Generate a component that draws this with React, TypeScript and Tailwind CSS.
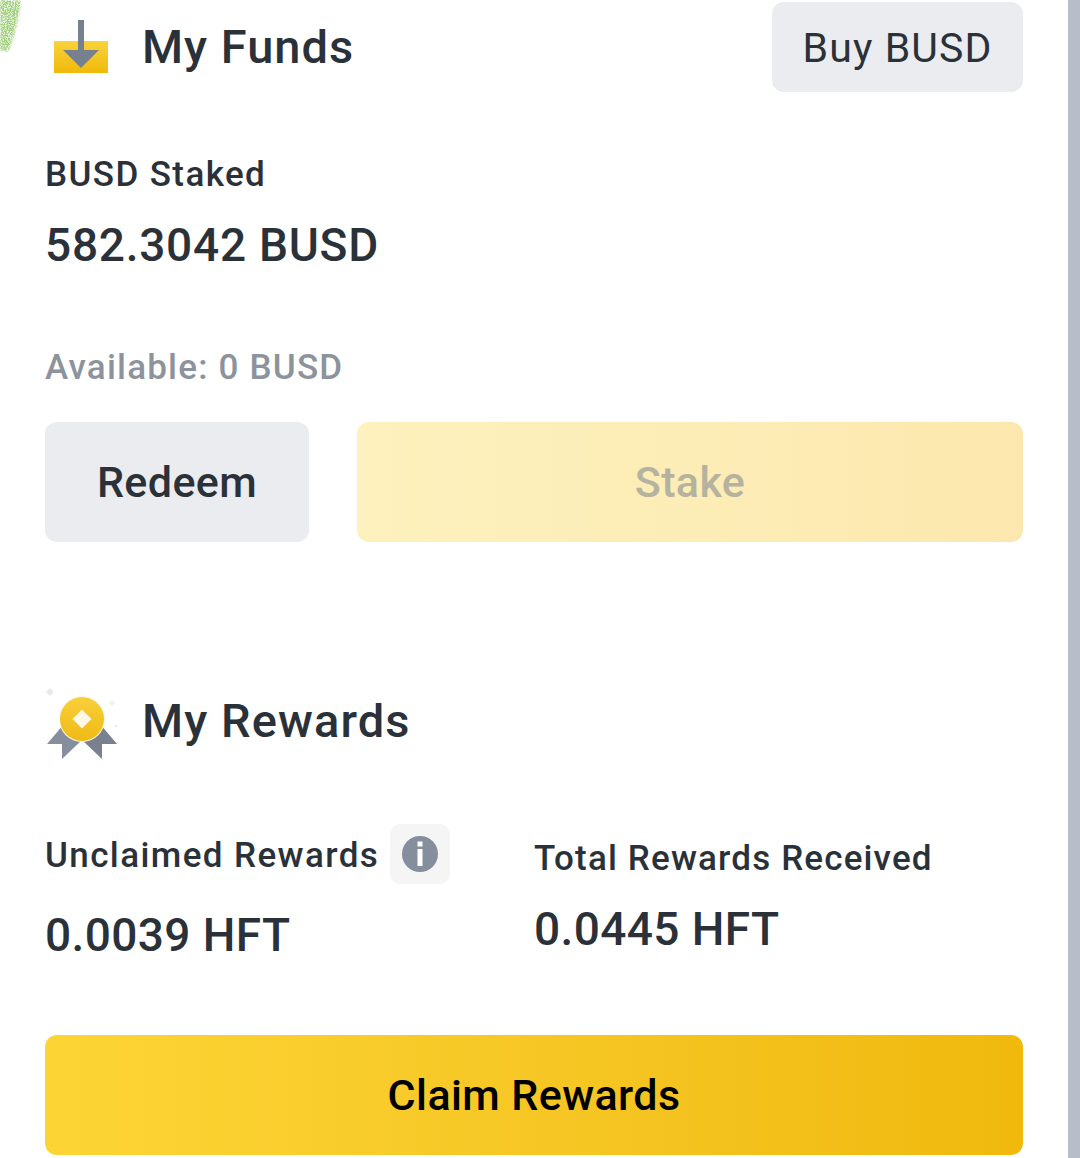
import React from "react";

function Foliage() {
  return (
    <svg width="24" height="56" viewBox="0 0 24 56" className="absolute left-0 top-0">
      <defs>
        <filter id="grain" x="0" y="0" width="100%" height="100%">
          <feGaussianBlur in="SourceGraphic" stdDeviation="1" result="soft" />
          <feTurbulence type="fractalNoise" baseFrequency="0.7" numOctaves="2" seed="4" result="noise" />
          <feColorMatrix in="noise" type="matrix" values="0 0 0 0 0 0 0 0 0 0 0 0 0 0 0 0 0 0 3 -0.800" result="mask" />
          <feComposite in="soft" in2="mask" operator="in" />
        </filter>
      </defs>
      <path d="M0 0H21C19 14 16 34 8 52L0 50Z" fill="#9ccf78" filter="url(#grain)" />
    </svg>
  );
}

function FundsIcon() {
  return (
    <svg width="56" height="56" viewBox="0 0 56 56" className="shrink-0">
      <defs>
        <linearGradient id="fg" x1="0" y1="0" x2="0" y2="1">
          <stop offset="0" stopColor="#f8d33a" />
          <stop offset="1" stopColor="#f0b90b" />
        </linearGradient>
      </defs>
      <rect x="1" y="21" width="54" height="32" fill="url(#fg)" />
      <rect x="25" y="0" width="6" height="32" fill="#76808f" />
      <path d="M10 30H46L28 48Z" fill="#76808f" />
    </svg>
  );
}

function MedalIcon() {
  return (
    <svg width="76" height="76" viewBox="0 0 76 76" className="shrink-0">
      <defs>
        <linearGradient id="coin" x1="0" y1="0" x2="0" y2="1">
          <stop offset="0" stopColor="#f8cf3a" />
          <stop offset="1" stopColor="#f0ba14" />
        </linearGradient>
      </defs>
      <path d="M20 40L3 60H18V75L38 56V40Z" fill="#868e9b" />
      <path d="M56 40L73 60H58V75L38 56V40Z" fill="#79818e" />
      <circle cx="38" cy="35" r="23" fill="#fdf8e4" />
      <circle cx="38" cy="35" r="22" fill="url(#coin)" />
      <path d="M38 25.500L47.500 35L38 44.500L28.500 35Z" fill="#fef9e6" />
      <path d="M6 4L10 8L6 12L2 8Z" fill="#e6e8ec" />
      <path d="M68 16L71 19L68 22L65 19Z" fill="#eef0f2" />
      <circle cx="72" cy="42" r="1" fill="#dfe2e6" />
    </svg>
  );
}

function InfoIcon() {
  return (
    <svg width="36" height="36" viewBox="0 0 36 36">
      <circle cx="18" cy="18" r="18" fill="#848e9c" />
      <rect x="15.500" y="5.500" width="5" height="5" fill="#fff" />
      <rect x="15.500" y="13" width="5" height="17" fill="#fff" />
    </svg>
  );
}

export default function App() {
  return (
    <div className="flex h-[1158px] w-full overflow-hidden bg-white font-['Roboto','Noto_Sans',sans-serif] text-[#2b3139]">
      <main className="relative min-w-0 flex-1 px-[45px] pt-[2px]">
        <Foliage />
        <header className="flex h-[90px] items-center justify-between">
          <div className="flex items-center">
            <div className="ml-[8px] mt-[2px] flex h-[56px] w-[89px] items-start">
              <FundsIcon />
            </div>
            <h1 className="mt-[-2px] text-[47px] font-medium leading-none tracking-[1px]">My Funds</h1>
          </div>
          <button className="flex h-[90px] w-[251px] items-center justify-center rounded-[12px] bg-[#eaecef] pt-[4px] text-[41px] tracking-[1.100px]">
            Buy BUSD
          </button>
        </header>

        <p className="mt-[63px] text-[35px] font-medium leading-[40px] tracking-[1.400px]">BUSD Staked</p>
        <p className="mt-[23px] text-[46px] font-medium leading-[54px] tracking-[0.750px]">582.3042 BUSD</p>
        <p className="mt-[76px] text-[35px] font-medium leading-[40px] tracking-[1.200px] text-[#8c939d]">Available: 0 BUSD</p>

        <div className="mt-[34px] flex gap-[48px]">
          <button className="h-[120px] w-[264px] rounded-[12px] bg-[#eaecef] text-[43px] font-medium tracking-[0.400px]">
            Redeem
          </button>
          <button className="h-[120px] flex-1 rounded-[12px] bg-gradient-to-r from-[#fdf1bd] to-[#fce8ae] text-[43px] font-medium tracking-[0.400px] text-[#b5b2a0]">
            Stake
          </button>
        </div>

        <section className="mt-[141px] flex h-[79px] items-center">
          <div className="ml-[-1px] mt-[-2px] w-[98px]">
            <MedalIcon />
          </div>
          <h2 className="mt-[-4px] text-[47px] font-medium leading-none tracking-[1.100px]">My Rewards</h2>
        </section>

        <div className="mt-[62px] flex">
          <div className="w-[489px]">
            <div className="flex h-[60px] items-center">
              <span className="pt-[4px] text-[35px] font-medium tracking-[1.400px]">Unclaimed Rewards</span>
              <span className="ml-[11px] flex h-[60px] w-[60px] items-center justify-center rounded-[10px] bg-[#f5f5f5]">
                <InfoIcon />
              </span>
            </div>
            <p className="mt-[21px] text-[46px] font-medium leading-[60px] tracking-[0.400px]">0.0039 HFT</p>
          </div>
          <div>
            <p className="mt-[13px] text-[35px] font-medium leading-[44px] tracking-[1.150px]">Total Rewards Received</p>
            <p className="mt-[18px] text-[46px] font-medium leading-[60px] tracking-[0.400px]">0.0445 HFT</p>
          </div>
        </div>

        <button className="mt-[70px] h-[120px] w-full rounded-[12px] bg-gradient-to-r from-[#fcd535] to-[#f0b90b] text-[43px] font-medium tracking-[0.400px] text-black">
          Claim Rewards
        </button>
      </main>
      <div className="w-[12px] shrink-0 bg-[#b7bdc9]" />
    </div>
  );
}
